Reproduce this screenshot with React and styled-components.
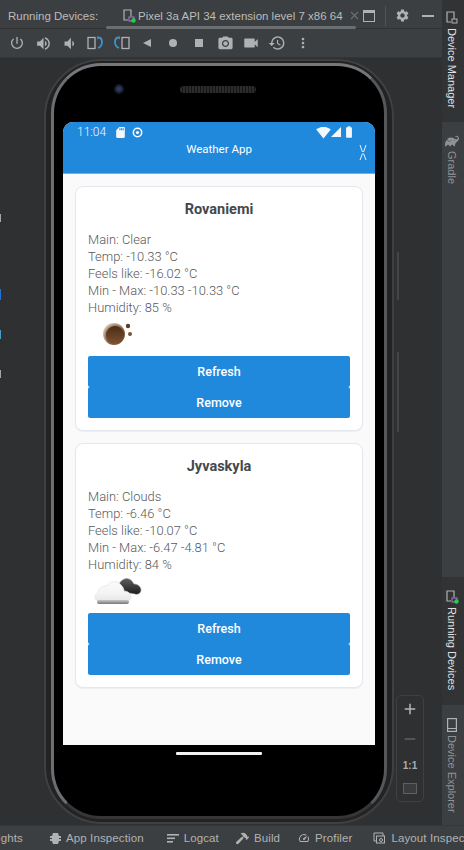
import React from "react";
import styled, { createGlobalStyle } from "styled-components";
import { MdPowerSettingsNew, MdVolumeUp, MdVolumeDown, MdCameraAlt, MdVideocam, MdSettings, MdMoreVert, MdRestore, MdSignalWifi4Bar, MdSignalCellular4Bar, MdBatteryFull, MdSdCard, MdSpeed, MdAdd, MdRemove } from "react-icons/md";
import { FaHammer } from "react-icons/fa";
import { SiGradle } from "react-icons/si";

const Global = createGlobalStyle`
  html, body { margin: 0; padding: 0; background: #2f3031; }
  body { width: 464px; height: 850px; overflow: hidden; font-family: "Roboto", "Liberation Sans", sans-serif; }
  * { box-sizing: border-box; }
  svg { flex: none; }
`;

const Ide = styled.div`
  position: relative; width: 464px; height: 850px;
  display: grid; grid-template-columns: 442px 22px; grid-template-rows: 825px 25px;
  background: #2f3031; overflow: hidden;
`;
const MainColumn = styled.div`display: flex; flex-direction: column; min-width: 0; height: 825px;`;
const TabBar = styled.div`
  height: 29px; flex: none; background: #3c3f41; display: flex; align-items: center; padding: 3px 0 0 8px;
  border-bottom: 1px solid #323232; color: #bbbbbb; font-family: "Liberation Sans", sans-serif; font-size: 11.5px;
`;
const TabLabel = styled.span`width: 98px; flex: none; white-space: nowrap;`;
const Tab = styled.div`
  position: relative; width: 250px; flex: none; height: 26px; display: flex; align-items: center; padding-left: 16px; gap: 2px; white-space: nowrap;
  &::after { content: ""; position: absolute; left: 0; right: 0; bottom: 0; height: 3px; background: #6b6e70; border-radius: 2px; }
`;
const TabClose = styled.svg`margin-left: 5px;`;
const BarIcon = styled.span`display: inline-flex; align-items: center; justify-content: center; flex: none; width: ${p => p.$w || 20}px; color: ${p => p.$c || "#afb1b3"};`;
const BarDivider = styled.span`width: 1px; height: 20px; flex: none; background: #515456; margin: 0 3px;`;
const Toolbar = styled.div`height: 29px; flex: none; background: #3c3f41; display: flex; align-items: center; padding-left: 4px; border-bottom: 1px solid #333536;`;
const ToolCell = styled.span`width: 26px; height: 26px; display: flex; align-items: center; justify-content: center; color: ${p => p.$c || "#afb1b3"};`;

const Canvas = styled.div`flex: 1; min-height: 0; background: #2f3031; padding: 1px 0 0 44px;`;
const Shell = styled.div`
  width: 350px; height: 765px; padding: 2px 5px 3px; border-radius: 58px; border: 2px solid #3f4041; background: #232324;
`;
const Bezel = styled.div`
  height: 100%; border-radius: 50px; border: 3px solid #6b6f73; background: #000; display: flex; flex-direction: column; align-items: center;
  border-top-color: #75787b; border-right-color: #55585b; border-bottom-color: #353637;
`;
const Sensors = styled.div`height: 56px; flex: none; width: 100%; display: flex; align-items: center; padding: 0 0 10px 60px; gap: 56px;`;
const Camera = styled.span`width: 10px; height: 10px; border-radius: 50%; background: radial-gradient(circle, #2b3a68 20%, #151821 60%, #0b0b0d 100%);`;
const Speaker = styled.span`width: 76px; height: 7px; border-radius: 4px; background: repeating-linear-gradient(90deg, #2c2c2c 0 2px, #161616 2px 3px);`;
const Screen = styled.div`width: 312px; height: 623px; flex: none; background: #fafafa; border-radius: 10px 10px 0 0; overflow: hidden; display: flex; flex-direction: column;`;
const AppHeader = styled.header`height: 52px; flex: none; background: #2089dc; border-bottom: 1px solid #63b4ee; color: #fff; display: flex; flex-direction: column;`;
const StatusBar = styled.div`height: 20px; flex: none; display: flex; align-items: center; padding: 0 20px 0 14px; font-size: 12px; font-weight: 300; color: #f2f8fd;`;
const Time = styled.span`width: 36px;`;
const StatusIcon = styled.span`display: inline-flex; width: ${p => p.$w}px; justify-content: center;`;
const Spacer = styled.span`flex: 1;`;
const TitleRow = styled.div`position: relative; flex: 1; text-align: center; font-size: 11.5px; font-weight: 400; line-height: 14px;`;
const CloseMark = styled.svg`position: absolute; right: 8px; top: 2px;`;
const CardList = styled.div`padding: 12px 12px 0; display: flex; flex-direction: column; gap: 12px;`;
const Card = styled.section`
  height: 245px; background: #fff; border: 1px solid #e3e8ee; border-radius: 8px; padding: 0 12px;
  box-shadow: 0 1px 1px rgba(0,0,0,.05); display: flex; flex-direction: column;
`;
const City = styled.h2`margin: 13px 0 12px; height: 19px; font-size: 14.5px; line-height: 19px; font-weight: 700; text-align: center; color: #43484d;`;
const Line = styled.div`height: 17px; font-size: 12.9px; line-height: 17px; font-weight: 300; color: #5a5a5a; white-space: nowrap;`;
const WeatherIcon = styled.div`height: 40px; flex: none; display: flex; align-items: flex-start; padding: 5px 0 0 ${p => p.$left}px;`;
const ActionButton = styled.button`
  height: 31px; flex: none; width: 100%; border: 0; border-radius: 2px; background: #2089dc; color: #fff;
  font-family: "Roboto", sans-serif; font-size: 12.5px; font-weight: 500; padding: 0;
`;
const NavArea = styled.div`flex: 1; width: 100%; display: flex; justify-content: center; padding-top: 7px;`;
const HomePill = styled.span`width: 86px; height: 3px; background: #f2f2f2; border-radius: 1px;`;

const Side = styled.aside`display: flex; flex-direction: column; background: #3c3f41; height: 825px;`;
const SideTab = styled.div`
  height: ${p => p.$h}px; flex: none; display: flex; flex-direction: column; align-items: center; padding: ${p => p.$top || 11}px 3px 0 0; gap: 3px;
  background: ${p => p.$on ? "#313335" : "#3c3f41"}; color: ${p => p.$on ? "#dfe1e3" : "#8f9295"};
`;
const SideText = styled.span`writing-mode: vertical-rl; font-family: "Liberation Sans", sans-serif; font-size: 11px; white-space: nowrap;`;
const SideFill = styled.div`flex: 1;`;

const BottomBar = styled.footer`
  grid-column: 1 / 3; background: #3c3f41; border-top: 1px solid #35373a; display: flex; align-items: center; overflow: hidden;
  color: #b0b2b4; font-family: "Liberation Sans", sans-serif; font-size: 11.5px; letter-spacing: .01em;
`;
const ClippedLeft = styled.div`width: 23px; flex: none; display: flex; justify-content: flex-end; overflow: hidden; white-space: nowrap;`;
const BottomItem = styled.div`display: flex; flex: none; align-items: center; gap: 5px; margin-left: ${p => p.$gap}px; white-space: nowrap;`;

const ZoomPanel = styled.div`
  position: absolute; left: 396px; top: 695px; width: 28px; height: 107px; border: 1px solid #3e4041; border-radius: 5px;
  display: flex; flex-direction: column; align-items: center; justify-content: space-between; padding: 4px 0 3px; color: #b4b6b8;
`;
const ZoomText = styled.span`font-family: "Liberation Sans", sans-serif; font-size: 10px; font-weight: 700; color: #a9abad;`;
const FitBox = styled.span`width: 14px; height: 11px; border: 1px solid #5e6062; background: #3a3c3d; margin-bottom: 4px;`;
const EdgeMark = styled.span`position: absolute; left: 0; top: ${p => p.$t}px; width: 1px; height: ${p => p.$h}px; background: ${p => p.$c};`;
const SideButton = styled.span`position: absolute; left: 397px; top: ${p => p.$t}px; width: 2px; height: ${p => p.$h}px; background: #454648;`;

const DeviceGlyph = ({ dot, size = 14, c = "#afb1b3" }) => (
  <svg width={size} height={size} viewBox="0 0 14 14" fill="none">
    <path d="M9 7.500V1H2v10h4" stroke={c} strokeWidth="1.2" />
    <rect x="7" y="8" width="5" height="4" stroke={dot ? "#a77bd0" : c} strokeWidth="1" />
    {dot && <circle cx="11.500" cy="11.500" r="2.200" fill="#19d63a" />}
  </svg>
);
const Rotate = ({ flip }) => (
  <svg width="17" height="14" viewBox="0 0 17 14" fill="none" style={flip ? { transform: "scaleX(-1)" } : undefined}>
    <rect x="1" y="1.500" width="7" height="11" stroke="#afb1b3" strokeWidth="1.300" />
    <path d="M11 1.500c3 0 4 2 4 4.500s-1 5-4 6" stroke="#3a92cf" strokeWidth="1.800" />
    <path d="M10 0l2.500 1.800L10 3.600z" fill="#3a92cf" />
  </svg>
);
const Moon = () => (
  <svg width="32" height="26" viewBox="0 0 32 26">
    <defs>
      <radialGradient id="moonRim" cx=".6" cy=".6" r=".6"><stop offset=".7" stopColor="#7f583a" /><stop offset="1" stopColor="#d3bda8" /></radialGradient>
      <linearGradient id="moonCore" x1="0" x2="0" y1="0" y2="1"><stop offset="0" stopColor="#4a2d17" /><stop offset="1" stopColor="#7d5131" /></linearGradient>
    </defs>
    <circle cx="11" cy="13" r="11" fill="url(#moonRim)" />
    <circle cx="12" cy="14" r="9" fill="url(#moonCore)" />
    <circle cx="25" cy="5" r="2.200" fill="#5e3d26" />
    <circle cx="27" cy="13" r="2" fill="#7a5234" />
  </svg>
);
const Clouds = () => (
  <svg width="48" height="27" viewBox="0 0 48 27">
    <defs>
      <linearGradient id="white" x1="0" x2="0" y1="0" y2="1"><stop offset="0" stopColor="#fbfbfb" /><stop offset=".6" stopColor="#f4f4f4" /><stop offset="1" stopColor="#e6e6e6" /></linearGradient>
      <linearGradient id="base" x1="0" x2="0" y1="0" y2="1"><stop offset="0" stopColor="#c8c8c8" /><stop offset="1" stopColor="#777" /></linearGradient>
      <linearGradient id="dark" x1="0" x2="0" y1="0" y2="1"><stop offset="0" stopColor="#5f5f5f" /><stop offset="1" stopColor="#1d1d1d" /></linearGradient>
    </defs>
    <path d="M24 9C25 3 31-1 35 1c3 1 4 4 5 5 4 0 7 3 7 6s-3 5-6 4L30 14c-3-2-5-3-6-5z" fill="url(#dark)" stroke="#999" strokeWidth=".5" />
    <path d="M4 23C0 22 0 16 4 15 4 10 9 7 13 8c2-5 11-6 14-1 2 2 3 4 3 6 4 0 7 3 7 6s-2 4-5 4z" fill="url(#white)" stroke="#e2e2e2" strokeWidth=".7" />
    <rect x="3" y="22" width="32" height="4" rx="2" fill="url(#base)" />
  </svg>
);

const cities = [
  { name: "Rovaniemi", main: "Clear", temp: "-10.33", feels: "-16.02", range: "-10.33 -10.33", hum: 85, left: 15, art: <Moon /> },
  { name: "Jyvaskyla", main: "Clouds", temp: "-6.46", feels: "-10.07", range: "-6.47 -4.81", hum: 84, left: 6, art: <Clouds /> },
];

export default function App() {
  const tools = [
    <MdPowerSettingsNew size={16} />, <MdVolumeUp size={17} />, <MdVolumeDown size={17} />, <Rotate />, <Rotate flip />,
    <svg width="10" height="10" viewBox="0 0 10 10"><path d="M9 1v8L1 5z" fill="#afb1b3" /></svg>,
    <svg width="10" height="10" viewBox="0 0 10 10"><circle cx="5" cy="5" r="4" fill="#afb1b3" /></svg>,
    <svg width="10" height="10" viewBox="0 0 10 10"><rect x="1" y="1" width="8" height="8" fill="#afb1b3" /></svg>,
    <MdCameraAlt size={17} />, <MdVideocam size={18} />, <MdRestore size={18} />, <MdMoreVert size={16} />,
  ];
  return (
    <Ide>
      <Global />
      <MainColumn>
        <TabBar>
          <TabLabel>Running Devices:</TabLabel>
          <Tab>
            <DeviceGlyph dot />
            <span>Pixel 3a API 34 extension level 7 x86 64</span>
            <TabClose width="9" height="9" viewBox="0 0 9 9" fill="none"><path d="M1 1l7 7M8 1L1 8" stroke="#6e7173" strokeWidth="1.100" /></TabClose>
          </Tab>
          <BarIcon $w={26}>
            <svg width="12" height="12" viewBox="0 0 12 12" fill="none"><rect x=".5" y=".5" width="11" height="11" stroke="#afb1b3" /><rect x="1" y="1" width="10" height="2" fill="#afb1b3" /></svg>
          </BarIcon>
          <BarDivider />
          <BarIcon $w={26}><MdSettings size={15} /></BarIcon>
          <BarIcon $w={26}><svg width="12" height="2" viewBox="0 0 12 2"><rect width="12" height="2" fill="#afb1b3" /></svg></BarIcon>
        </TabBar>
        <Toolbar>
          {tools.map((t, i) => <ToolCell key={i}>{t}</ToolCell>)}
        </Toolbar>
        <Canvas>
          <Shell>
            <Bezel>
              <Sensors><Camera /><Speaker /></Sensors>
              <Screen>
                <AppHeader>
                  <StatusBar>
                    <Time>11:04</Time>
                    <StatusIcon $w={14}><MdSdCard size={13} /></StatusIcon>
                    <StatusIcon $w={20}>
                      <svg width="11" height="11" viewBox="0 0 11 11" fill="none"><circle cx="5.500" cy="5.500" r="4.200" stroke="#fff" strokeWidth="1.500" /><circle cx="5.500" cy="5.500" r="1.600" fill="#fff" /></svg>
                    </StatusIcon>
                    <Spacer />
                    <StatusIcon $w={14}><MdSignalWifi4Bar size={15} /></StatusIcon>
                    <StatusIcon $w={12}><MdSignalCellular4Bar size={12} /></StatusIcon>
                    <StatusIcon $w={13}><MdBatteryFull size={14} /></StatusIcon>
                  </StatusBar>
                  <TitleRow>
                    Weather App
                    <CloseMark width="8" height="17" viewBox="0 0 8 17" fill="none">
                      <path d="M1 1l2.500 7M7 1L4.500 8M3.500 9.500L1 16M4.500 9.500L7 16" stroke="#e8f3fc" strokeWidth="1" />
                    </CloseMark>
                  </TitleRow>
                </AppHeader>
                <CardList>
                  {cities.map(c => (
                    <Card key={c.name}>
                      <City>{c.name}</City>
                      <Line>Main: {c.main}</Line>
                      <Line>Temp: {c.temp} °C</Line>
                      <Line>Feels like: {c.feels} °C</Line>
                      <Line>Min - Max: {c.range} °C</Line>
                      <Line>Humidity: {c.hum} %</Line>
                      <WeatherIcon $left={c.left}>{c.art}</WeatherIcon>
                      <ActionButton>Refresh</ActionButton>
                      <ActionButton>Remove</ActionButton>
                    </Card>
                  ))}
                </CardList>
              </Screen>
              <NavArea><HomePill /></NavArea>
            </Bezel>
          </Shell>
        </Canvas>
      </MainColumn>
      <Side>
        <SideTab $on $h={122}><DeviceGlyph /><SideText>Device Manager</SideText></SideTab>
        <SideTab $h={68} $top={12}><SiGradle size={14} color="#8f9295" /><SideText>Gradle</SideText></SideTab>
        <SideFill />
        <SideTab $on $h={128} $top={13}><DeviceGlyph dot /><SideText>Running Devices</SideText></SideTab>
        <SideTab $h={120} $top={13}>
          <svg width="10" height="14" viewBox="0 0 10 14" fill="none"><rect x=".6" y=".6" width="8.800" height="12.800" stroke="#afb1b3" strokeWidth="1.200" /><rect x="1" y="10" width="8" height="1" fill="#afb1b3" /></svg>
          <SideText>Device Explorer</SideText>
        </SideTab>
      </Side>
      <BottomBar>
        <ClippedLeft>Insights</ClippedLeft>
        <BottomItem $gap={27}>
          <svg width="11" height="13" viewBox="0 0 11 13"><path d="M3 1h5l1 3h2v2H9v1h2v2H9l-1 3H3l-1-3H0V7h2V6H0V4h2z" fill="#b0b2b4" /></svg>
          <span>App Inspection</span>
        </BottomItem>
        <BottomItem $gap={23}>
          <svg width="12" height="10" viewBox="0 0 12 10"><rect y="1" width="12" height="1.600" fill="#b0b2b4" /><rect y="4.500" width="8" height="1.600" fill="#b0b2b4" /><rect y="8" width="6" height="1.600" fill="#b0b2b4" /></svg>
          <span>Logcat</span>
        </BottomItem>
        <BottomItem $gap={17}><FaHammer size={13} /><span>Build</span></BottomItem>
        <BottomItem $gap={18}><MdSpeed size={12} /><span>Profiler</span></BottomItem>
        <BottomItem $gap={21}>
          <svg width="13" height="13" viewBox="0 0 13 13" fill="none"><path d="M3 9H1V1h9v3" stroke="#b0b2b4" /><rect x="3.500" y="4" width="8" height="7" stroke="#b0b2b4" /><circle cx="8" cy="8" r="1.500" stroke="#b0b2b4" /></svg>
          <span>Layout Inspector</span>
        </BottomItem>
      </BottomBar>
      <ZoomPanel>
        <MdAdd size={18} />
        <MdRemove size={18} color="#5f6163" />
        <ZoomText>1:1</ZoomText>
        <FitBox />
      </ZoomPanel>
      <SideButton $t={252} $h={48} />
      <SideButton $t={352} $h={80} />
      <EdgeMark $t={214} $h={8} $c="#a9a4a4" />
      <EdgeMark $t={289} $h={11} $c="#2470d8" />
      <EdgeMark $t={330} $h={9} $c="#4f9ec4" />
      <EdgeMark $t={370} $h={8} $c="#a9a4a4" />
    </Ide>
  );
}
